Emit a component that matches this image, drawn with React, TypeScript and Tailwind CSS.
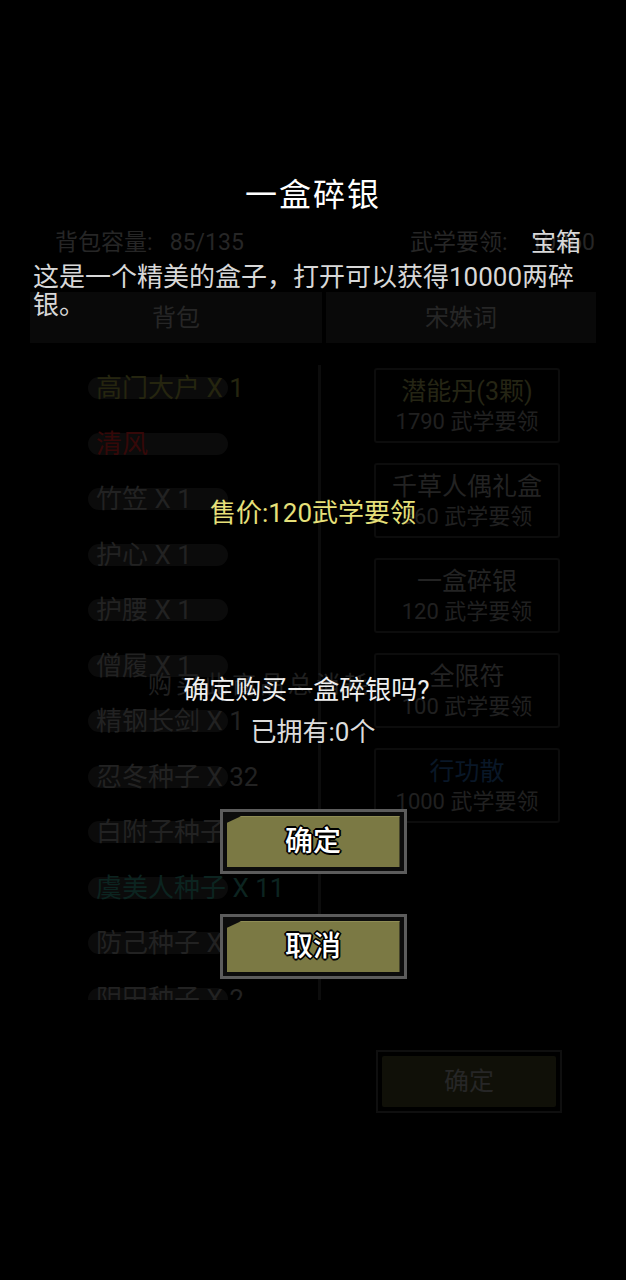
import React from 'react';

interface BagItem {
  label: string;
  color: string;
}

interface ShopItem {
  name: string;
  price: string;
  nameColor: string;
}

const bagItems: BagItem[] = [
  { label: '高门大户 X 1', color: 'text-[#25250f]' },
  { label: '清风', color: 'text-[#350808]' },
  { label: '竹笠 X 1', color: 'text-[#222222]' },
  { label: '护心 X 1', color: 'text-[#222222]' },
  { label: '护腰 X 1', color: 'text-[#222222]' },
  { label: '僧履 X 1', color: 'text-[#222222]' },
  { label: '精钢长剑 X 1', color: 'text-[#222222]' },
  { label: '忍冬种子 X 32', color: 'text-[#222222]' },
  { label: '白附子种子 X 6', color: 'text-[#222222]' },
  { label: '虞美人种子 X 11', color: 'text-[#0c2420]' },
  { label: '防己种子 X 2', color: 'text-[#222222]' },
  { label: '阴田种子 X 2', color: 'text-[#222222]' },
];

const shopItems: ShopItem[] = [
  { name: '潜能丹(3颗)', price: '1790 武学要领', nameColor: 'text-[#252514]' },
  { name: '千草人偶礼盒', price: '360 武学要领', nameColor: 'text-[#232323]' },
  { name: '一盒碎银', price: '120 武学要领', nameColor: 'text-[#232323]' },
  { name: '全限符', price: '100 武学要领', nameColor: 'text-[#232323]' },
  { name: '行功散', price: '1000 武学要领', nameColor: 'text-[#091727]' },
];

const FONT = "font-['Roboto','Noto_Sans_CJK_SC',sans-serif]";

function OliveButton({ label }: { label: string }) {
  return (
    <div className="w-[187px] h-[65px] border-[3px] border-[#5c5c5c] bg-[#0c0c0c] p-[4px]">
      <div className="h-full bg-[#7b7944] [clip-path:polygon(15px_0,100%_0,100%_100%,0_100%,0_7px)] border-t border-[#8f8d55] flex items-center justify-center">
        <span className="text-[28px] leading-none font-medium text-white [text-shadow:-1px_-1px_0_#000,1px_-1px_0_#000,-1px_1px_0_#000,1px_1px_0_#000,0_2px_0_#000,2px_0_0_#000,-2px_0_0_#000,0_-2px_0_#000]">
          {label}
        </span>
      </div>
    </div>
  );
}

export default function App() {
  return (
    <div className={`relative h-[1280px] w-full overflow-hidden bg-black ${FONT}`}>
      {/* dimmed shop screen */}
      <div className="pt-[229px]">
        <div className="flex justify-between pl-[55px] pr-[31px] text-[23px] leading-[28px] text-[#262626]">
          <span className="whitespace-pre">背包容量:   85/135</span>
          <span className="whitespace-pre">武学要领:    10960</span>
        </div>

        <div className="mt-[35px] mx-[30px] flex gap-[4px] h-[51px]">
          <div className="w-[292px] bg-[#090909] flex items-center justify-center text-[24px] text-[#262626]">背包</div>
          <div className="flex-1 bg-[#090909] flex items-center justify-center text-[24px] text-[#262626]">宋姝词</div>
        </div>

        <div className="mt-[22px] flex h-[635px]">
          <div className="w-[321px] border-r-[3px] border-[#0c0c0c] overflow-hidden pl-[88px] pt-[12px] flex flex-col gap-[33.5px]">
            {bagItems.map((item) => (
              <div
                key={item.label}
                className="w-[140px] h-[22px] shrink-0 rounded-full bg-[#0b0b0b] flex items-center pl-[8px] whitespace-nowrap"
              >
                <span className={`text-[26px] leading-none ${item.color}`}>{item.label}</span>
              </div>
            ))}
          </div>

          <div className="pl-[53px] pt-[3px] flex flex-col gap-[20px]">
            {shopItems.map((item) => (
              <div
                key={item.name}
                className="w-[186px] h-[75px] border-2 border-[#0c0c0c] rounded-[3px] flex flex-col items-center justify-center"
              >
                <span className={`text-[25px] leading-[32px] ${item.nameColor}`}>{item.name}</span>
                <span className="text-[22px] leading-[28px] text-[#202020]">{item.price}</span>
              </div>
            ))}
          </div>
        </div>

        <div className="mt-[50px] ml-[376px] w-[186px] h-[63px] border-2 border-[#0f0f0f] p-[4px]">
          <div className="h-full bg-[#101008] rounded-[2px] flex items-center justify-center text-[25px] text-[#262626]">
            确定
          </div>
        </div>
      </div>

      <div className="absolute left-[148px] top-[671px] text-[24px] leading-[28px] tracking-[4px] text-[#202020] whitespace-nowrap">
        购买此商品总消耗
      </div>

      {/* item detail / purchase dialog */}
      <div className="absolute inset-0 flex flex-col">
        <div className="mt-[175px] text-center text-[32px] leading-[40px] text-white tracking-[2px]">一盒碎银</div>
        <div className="mt-[14px] pr-[45px] text-right text-[25px] leading-[28px] text-[#d8d8d8]">宝箱</div>
        <div className="mt-[6px] pl-[33px] w-[593px] text-[26px] leading-[28px] text-[#d8d8d8]">
          这是一个精美的盒子，打开可以获得10000两碎银。
        </div>

        <div className="mt-[179px] text-center text-[26px] leading-[30px] text-[#e6e07a]">售价:120武学要领</div>

        <div className="mt-[147px] pr-[13px] text-center text-[26px] leading-[30px] text-[#efefef]">确定购买一盒碎银吗?</div>
        <div className="mt-[12px] text-center text-[26px] leading-[30px] text-[#dcdcdc]">已拥有:0个</div>

        <div className="mt-[62px] flex flex-col items-center gap-[40px]">
          <OliveButton label="确定" />
          <OliveButton label="取消" />
        </div>
      </div>
    </div>
  );
}
